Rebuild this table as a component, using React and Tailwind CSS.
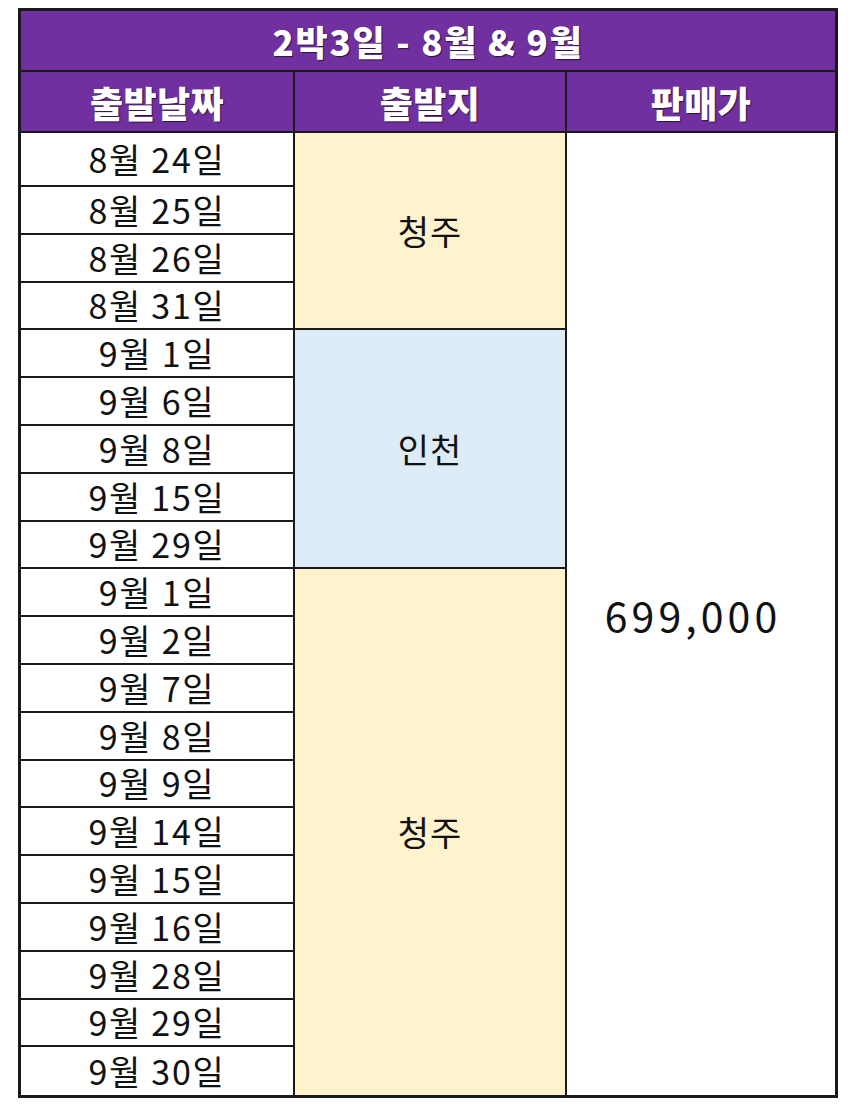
import React from "react";

const groups = [
  { city: "청주", bg: "bg-[#fff2cc]", dates: ["8월 24일", "8월 25일", "8월 26일", "8월 31일"] },
  { city: "인천", bg: "bg-[#ddebf7]", dates: ["9월 1일", "9월 6일", "9월 8일", "9월 15일", "9월 29일"] },
  {
    city: "청주",
    bg: "bg-[#fff2cc]",
    dates: [
      "9월 1일",
      "9월 2일",
      "9월 7일",
      "9월 8일",
      "9월 9일",
      "9월 14일",
      "9월 15일",
      "9월 16일",
      "9월 28일",
      "9월 29일",
      "9월 30일",
    ],
  },
];

const spanClass = {
  4: "row-span-4",
  5: "row-span-5",
  11: "row-span-11",
};

export default function App() {
  const totalRows = groups.reduce((n, g) => n + g.dates.length, 0);
  let rowIndex = 0;

  const cells = [];
  groups.forEach((g, gi) => {
    const lastGroup = gi === groups.length - 1;
    g.dates.forEach((d, di) => {
      const isLast = rowIndex === totalRows - 1;
      cells.push(
        <div
          key={`d-${rowIndex}`}
          className={`flex items-center justify-center border-r-2 border-[#1a1a1a] bg-white text-[34px] font-normal leading-none tracking-[0.05em] text-[#111] ${
            isLast ? "" : "border-b-2"
          }`}
        >
          {d}
        </div>,
      );
      if (di === 0) {
        cells.push(
          <div
            key={`c-${gi}`}
            className={`${spanClass[g.dates.length]} ${g.bg} flex items-center justify-center border-r-2 border-[#1a1a1a] text-[34px] leading-none tracking-[0.03em] text-[#111] ${
              lastGroup ? "" : "border-b-2"
            }`}
          >
            {g.city}
          </div>,
        );
      }
      if (rowIndex === 0) {
        cells.push(
          <div
            key="price"
            className="row-span-20 flex items-center justify-center bg-white pr-[16px] text-[41px] font-normal leading-none tracking-[0.1em] text-[#111]"
          >
            699,000
          </div>,
        );
      }
      rowIndex++;
    });
  });

  return (
    <div className="min-h-[1111px] w-[860px] bg-white pl-[18px] pt-[8px] font-['Noto_Sans_CJK_KR',sans-serif]">
      <div className="grid w-[820px] grid-cols-[274px_272px_1fr] grid-rows-[61px_61px_54px_repeat(19,47.8px)] border-[3px] border-[#1a1a1a]">
        {/* Title */}
        <div className="col-span-3 flex items-center justify-center border-b-2 border-[#1a1a1a] bg-[#7030a0] text-[35px] font-black leading-none tracking-[0.05em] text-white [text-shadow:1px_1px_1px_rgba(0,0,0,0.6)]">
          2박3일 - 8월 &amp; 9월
        </div>

        {/* Column headers */}
        {["출발날짜", "출발지", "판매가"].map((h, i) => (
          <div
            key={h}
            className={`flex items-center justify-center border-b-2 border-[#1a1a1a] bg-[#7030a0] text-[36px] font-black leading-none tracking-[0.01em] text-white [text-shadow:1px_1px_1px_rgba(0,0,0,0.6)] ${
              i < 2 ? "border-r-2" : ""
            }`}
          >
            {h}
          </div>
        ))}

        {cells}
      </div>
    </div>
  );
}
